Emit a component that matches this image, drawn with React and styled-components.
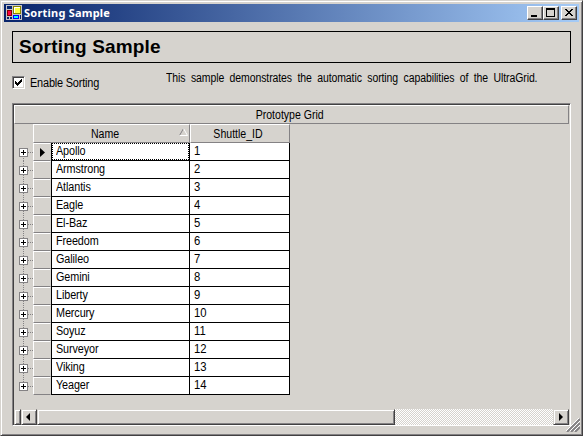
import React from "react";
import styled, { createGlobalStyle } from "styled-components";

const Global = createGlobalStyle`
  *{box-sizing:border-box}
  body{margin:0;background:#d6d3ce;overflow:hidden}
`;
const face = "#d6d3ce";
const shade = "#848284";
const dark = "#424142";

const Window = styled.main`
  position:relative;width:583px;height:436px;background:${face};
  border:1px solid;border-color:${face} ${dark} ${dark} ${face};
  box-shadow:inset 1px 1px #fff,inset -1px -1px ${shade};
  padding:3px;display:flex;flex-direction:column;
  font:12px/14px "Liberation Sans",Arial,sans-serif;color:#000;
`;
const TitleBar = styled.header`
  height:18px;display:flex;align-items:center;padding:0 2px;
  background:linear-gradient(90deg,#08246b,#a5cbf7);
`;
const Title = styled.h1`
  margin:0 auto 0 1px;color:#fff;
  font:bold 11px/18px "Noto Sans","Open Sans",sans-serif;
  letter-spacing:0.22px;white-space:nowrap;
`;
const WindowButton = styled.button`
  border:1px solid;border-color:#fff ${dark} ${dark} #fff;
  box-shadow:inset -1px -1px ${shade};background:${face};
  width:16px;height:14px;padding:0;margin-left:${p => p.$gap || 0}px;display:block;
  svg{display:block}
`;
const Content = styled.section`
  padding:9px 8px 0;display:flex;flex-direction:column;
`;
const Banner = styled.h2`
  margin:0;width:559px;height:32px;border:1px solid #000;padding-left:6px;
  font:bold 19px/29px "Liberation Sans",Arial,sans-serif;letter-spacing:0.17px;white-space:nowrap;
`;
const Options = styled.div`
  height:40px;display:flex;align-items:flex-start;white-space:nowrap;
`;
const CheckLabel = styled.label`
  display:flex;align-items:center;gap:5px;margin-top:13px;height:13px;flex:0 0 154px;
`;
const CheckBox = styled.span`
  width:13px;height:13px;background:#fff;border:1px solid;border-color:${shade} #fff #fff ${shade};
  box-shadow:inset 1px 1px ${dark},inset -1px -1px ${face};
  svg{display:block}
`;
const Text = styled.span`
  display:inline-block;white-space:nowrap;
  transform:scaleX(${p => p.$scale || 0.88});
  transform-origin:${p => p.$center ? "50%" : "0"} 50%;
  letter-spacing:${p => p.$ls || 0}px;word-spacing:${p => p.$ws || 0}px;
`;
const Description = styled.p`
  margin:8px 0 0;width:380px;
`;
const Grid = styled.section`
  width:559px;height:323px;border:1px solid;border-color:${shade} #fff #fff ${shade};
  box-shadow:inset 1px 1px ${dark};padding:1px 1px 0;display:flex;flex-direction:column;
`;
const Caption = styled.div`
  height:19px;text-align:center;line-height:18px;flex:none;padding-right:4px;
  border:1px solid;border-color:#fff ${shade} ${shade} #fff;
`;
const Columns = styled.div`
  display:grid;grid-template-columns:157px 100px;height:19px;margin-left:19px;flex:none;
`;
const ColumnHeader = styled.div`
  border:1px solid;border-color:#fff ${shade} ${shade} #fff;padding-right:${p => p.$inset}px;
  display:flex;align-items:center;justify-content:center;position:relative;
`;
const SortMark = styled.svg`position:absolute;right:1px;top:3px;`;
const Rows = styled.div`flex:1;`;
const Row = styled.div`
  display:grid;grid-template-columns:19px 18px 139px 100px;height:18px;
`;
const Branch = styled.svg`display:block;width:19px;height:18px;`;
const Selector = styled.div`
  border:1px solid;border-color:#fff transparent ${shade} #fff;
  svg{display:block}
`;
const Cell = styled.div`
  position:relative;background:#fff;padding-left:4px;line-height:16px;
  border-right:1px solid #000;border-bottom:1px solid #000;
  border-left:${p => p.$first ? "1px solid #000" : "0"};
`;
const Focus = styled.span`
  position:absolute;inset:0;border:1px dotted #000;
`;
const ScrollBar = styled.div`
  display:flex;height:16px;flex:none;
  background:repeating-conic-gradient(#fff 0 25%,${face} 0 50%) 0 0/2px 2px;
`;
const ScrollPart = styled.div`
  border:1px solid;border-color:${face} ${dark} ${dark} ${face};
  box-shadow:inset 1px 1px #fff,inset -1px -1px ${shade};background:${face};
  width:${p => p.$w}px;margin-left:${p => p.$end ? "auto" : 0};
  svg{display:block}
`;
const Grip = styled.svg`position:absolute;right:2px;bottom:3px;`;

const names = ["Apollo","Armstrong","Atlantis","Eagle","El-Baz","Freedom","Galileo","Gemini","Liberty","Mercury","Soyuz","Surveyor","Viking","Yeager"];

const AppIcon = () => (
  <svg width="17" height="16" shapeRendering="crispEdges">
    <path d="M0 0h16v15H0z" fill="#c6c3c6"/>
    <path d="M1 1h5v3H1zM1 12h2v2H1zM4 12h2v2H4zM14 10h1v4h-1z" fill="#08246b"/>
    <path d="M1 5h5v6H1z" fill="#840000"/><path d="M2 6h3v4H2z" fill="#ff0042"/>
    <path d="M7 1h8v8H7z" fill="#848200"/><path d="M8 2h6v6H8z" fill="#ffff42"/>
    <path d="M8 2h6v1H9v5H8z" fill="#fff"/>
    <path d="M7 10h6v4H7z" fill="#0000ff"/><path d="M8 11h4v2H8z" fill="#00ffff"/>
  </svg>
);

export default function App() {
  return <>
    <Global/>
    <Window>
      <TitleBar>
        <AppIcon/>
        <Title>Sorting Sample</Title>
        <WindowButton aria-label="Minimize"><svg width="14" height="12"><path d="M3 8h6v2H3z"/></svg></WindowButton>
        <WindowButton aria-label="Maximize"><svg width="14" height="12" shapeRendering="crispEdges"><path fillRule="evenodd" d="M2 1h9v9H2zM3 3v6h7V3z"/></svg></WindowButton>
        <WindowButton $gap={2} aria-label="Close"><svg width="14" height="12" shapeRendering="crispEdges"><path d="M3 2h2v1h1v1h2V3h1V2h2v1h-1v1H9v1H8v1h1v1h1v1h1v1H9V8H8V7H6v1H5v1H3V8h1V7h1V6h1V5H5V4H4V3H3z"/></svg></WindowButton>
      </TitleBar>
      <Content>
        <Banner>Sorting Sample</Banner>
        <Options>
          <CheckLabel><CheckBox><svg width="11" height="11" shapeRendering="crispEdges"><path d="M2 4h1v1h1v1h1V5h1V4h1V3h1V2h1v3H8v1H7v1H6v1H5v1H4V8H3V7H2z"/></svg></CheckBox><Text $scale={0.91} $ls={-0.2}>Enable Sorting</Text></CheckLabel>
          <Description><Text $scale={0.873} $ls={-0.1} $ws={3}>This sample demonstrates the automatic sorting capabilities of the UltraGrid.</Text></Description>
        </Options>
        <Grid>
          <Caption><Text $center>Prototype Grid</Text></Caption>
          <Columns>
            <ColumnHeader $inset={12}><Text $center>Name</Text><SortMark width="9" height="8"><path d="M.5 7.5 4.5.5" stroke="#848284"/><path d="m4.5.5 4 7h-8" fill="none" stroke="#fff"/></SortMark></ColumnHeader>
            <ColumnHeader $inset={3}><Text $center>Shuttle_ID</Text></ColumnHeader>
          </Columns>
          <Rows>{names.map((name, i) => (
            <Row key={name}>
              <Branch shapeRendering="crispEdges">
                <path d={`M9.5 ${i ? 0 : 9}V${i < 13 ? 18 : 9}M14 9.5h5`} stroke="#848284" strokeDasharray="1 1"/>
                <path d="M5.5 5.5h8v8h-8z" fill="#fff" stroke="#848284"/><path d="M7 9.5h5M9.5 7v5" stroke="#000"/>
              </Branch>
              <Selector>{i === 0 && <svg width="16" height="16"><path d="M6 4v9l5-4.5z"/></svg>}</Selector>
              <Cell $first>{i === 0 && <Focus/>}<Text $scale={0.9} $ls={-0.1}>{name}</Text></Cell>
              <Cell><Text $scale={0.94}>{i + 1}</Text></Cell>
            </Row>))}
          </Rows>
          <ScrollBar>
            <ScrollPart $w={7}/>
            <ScrollPart $w={16}><svg width="14" height="14"><path d="M8 3v8L4 7z"/></svg></ScrollPart>
            <ScrollPart $w={358}/>
            <ScrollPart $w={16} $end><svg width="14" height="14"><path d="M5 3v8l4-4z"/></svg></ScrollPart>
          </ScrollBar>
        </Grid>
      </Content>
      <Grip width="14" height="14"><path d="M1 14 14 1M5 14l9-9M9 14l5-5" stroke="#848284" strokeWidth="2"/><path d="M0 13 13 0M4 13 14 3M8 13l6-6" stroke="#fff"/></Grip>
    </Window>
  </>;
}
